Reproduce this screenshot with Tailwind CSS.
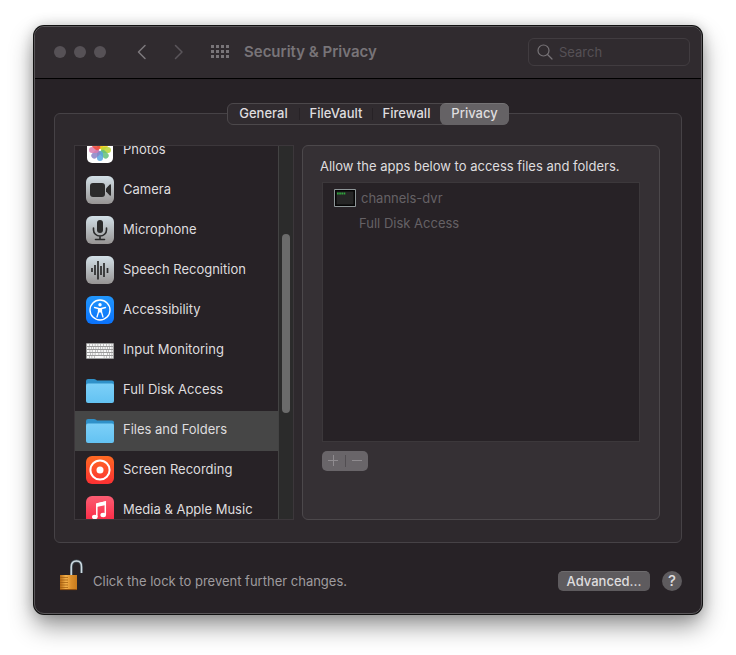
<!DOCTYPE html>
<html lang="en">
<head>
    <meta charset="UTF-8">
    <meta name="viewport" content="width=device-width, initial-scale=1.0">
    <title>Security &amp; Privacy</title>
    <script src="https://cdn.jsdelivr.net/npm/@tailwindcss/browser@4"></script>
</head>
<body class="bg-white px-[34px] pt-[26px] pb-10 font-['Inter',sans-serif] text-[13px] leading-4 text-[#dfdddf]">
    <div class="rounded-[10px] border border-[#5a575a] bg-[#272226] shadow-[0_0_0_1px_#111,0_0_14px_rgba(0,0,0,0.2),0_12px_24px_rgba(0,0,0,0.42)]">
        <!-- Title bar -->
        <header class="flex h-[52px] items-center rounded-t-[9px] border-b border-black bg-[#302b2f] pr-[11px] pb-0.5 pl-[19px]">
            <div class="flex gap-2">
                <button aria-label="Close" class="size-3 rounded-full bg-[#565156]"></button>
                <button aria-label="Minimize" class="size-3 rounded-full bg-[#565156]"></button>
                <button aria-label="Zoom" class="size-3 rounded-full bg-[#565156]"></button>
            </div>
            <button aria-label="Back" class="ml-[31px] text-[#7d797d]">
                <svg class="h-4 w-2.5" viewBox="0 0 10 16" fill="none" stroke="currentColor" stroke-width="1.5" stroke-linecap="round" stroke-linejoin="round"><path d="M8 1.5 1.5 8 8 14.5"/></svg>
            </button>
            <button aria-label="Forward" class="ml-[27px] text-[#5a555a]">
                <svg class="h-4 w-2.5" viewBox="0 0 10 16" fill="none" stroke="currentColor" stroke-width="1.5" stroke-linecap="round" stroke-linejoin="round"><path d="M1.5 1.5 8 8l-6.500 6.500"/></svg>
            </button>
            <button aria-label="Show All" class="ml-[27px] text-[#797579]">
                <svg class="h-[13px] w-[18px]" viewBox="0 0 18 13" fill="currentColor">
                    <path d="M0 0h3v3H0zM5 0h3v3H5zM10 0h3v3h-3zM15 0h3v3h-3zM0 5h3v3H0zM5 5h3v3H5zM10 5h3v3h-3zM15 5h3v3h-3zM0 10h3v3H0zM5 10h3v3H5zM10 10h3v3h-3zM15 10h3v3h-3z"/>
                </svg>
            </button>
            <h1 class="ml-[15px] text-[15px] font-semibold text-[#787478]">Security &amp; Privacy</h1>
            <label class="ml-auto flex h-7 w-[162px] items-center gap-1 rounded-md border border-[#413c40] px-2 text-[#777377]">
                <svg class="size-4 shrink-0" viewBox="0 0 16 16" fill="none" stroke="currentColor" stroke-width="1.2" stroke-linecap="round"><circle cx="6.500" cy="6.500" r="5.500"/><path d="m10.500 10.500 4.500 4.500"/></svg>
                <input type="text" aria-label="Search" placeholder="Search" class="w-full min-w-0 bg-transparent px-0.5 outline-none placeholder:text-[#565156]">
            </label>
        </header>

        <main class="px-[19px] pt-6">
            <!-- Tabs -->
            <div class="relative z-10 mx-auto -mb-3 flex h-[22px] w-[282px] items-center rounded-md border border-[#4c484b] bg-[#302b2f] font-medium" role="tablist">
                <button role="tab" class="h-full w-[71px] pb-0.5">General</button>
                <span class="h-3 w-px bg-[#272226]"></span>
                <button role="tab" class="h-full w-[72px] pb-0.5">FileVault</button>
                <span class="h-3 w-px bg-[#272226]"></span>
                <button role="tab" class="h-full w-[67px] pb-0.5">Firewall</button>
                <button role="tab" aria-selected="true" class="-my-px -mr-px h-[22px] flex-1 rounded-md border-t border-[#757375] bg-[#656265] pb-[3px]">Privacy</button>
            </div>

            <div class="flex gap-2 rounded-md border border-[#464246] bg-[#2e292d] pt-[31px] pr-[21px] pb-[22px] pl-[19px]">
                <!-- Categories -->
                <div class="flex h-[375px] w-[220px] shrink-0 overflow-hidden border border-[#3c373b] bg-[#272226]">
                    <ul class="-mt-[15px] flex-1">
                        <li>
                            <button class="flex h-10 w-full items-center gap-[9px] pb-0.5 pl-[11px]">
                                <svg class="size-7" viewBox="0 0 28 28">
                                    <rect x="1" y="1" width="26" height="26" rx="5" fill="#fff"/>
                                    <g fill-opacity="0.850">
                                        <rect x="11" y="3" width="6" height="10" rx="3" fill="#f89b1c"/>
                                        <rect x="11" y="3" width="6" height="10" rx="3" fill="#f2d31b" transform="rotate(45 14 14)"/>
                                        <rect x="11" y="3" width="6" height="10" rx="3" fill="#b9d532" transform="rotate(90 14 14)"/>
                                        <rect x="11" y="3" width="6" height="10" rx="3" fill="#63c07a" transform="rotate(135 14 14)"/>
                                        <rect x="11" y="3" width="6" height="10" rx="3" fill="#57a5df" transform="rotate(180 14 14)"/>
                                        <rect x="11" y="3" width="6" height="10" rx="3" fill="#8a83c6" transform="rotate(225 14 14)"/>
                                        <rect x="11" y="3" width="6" height="10" rx="3" fill="#d97bae" transform="rotate(270 14 14)"/>
                                        <rect x="11" y="3" width="6" height="10" rx="3" fill="#ef4b3c" transform="rotate(315 14 14)"/>
                                    </g>
                                </svg>
                                <span class="pb-0.5">Photos</span>
                            </button>
                        </li>
                        <li>
                            <button class="flex h-10 w-full items-center gap-[9px] pb-0.5 pl-[11px]">
                                <svg class="size-7" viewBox="0 0 28 28">
                                    <defs><linearGradient id="silver" x2="0" y2="1"><stop stop-color="#d3e0e7"/><stop offset="1" stop-color="#979493"/></linearGradient></defs>
                                    <rect width="28" height="28" rx="6" fill="url(#silver)"/>
                                    <rect x="4" y="7" width="15" height="14" rx="3" fill="#2b2b2b"/>
                                    <path d="M20 12.500 23.800 8.500q1.200-.7 1.200.8v9.400q0 1.500-1.200.8L20 15.500z" fill="#2b2b2b"/>
                                </svg>
                                <span class="pb-0.5">Camera</span>
                            </button>
                        </li>
                        <li>
                            <button class="flex h-10 w-full items-center gap-[9px] pb-0.5 pl-[11px]">
                                <svg class="size-7" viewBox="0 0 28 28">
                                    <rect width="28" height="28" rx="6" fill="url(#silver)"/>
                                    <rect x="11" y="4" width="6" height="13" rx="3" fill="#2b2b2b"/>
                                    <path d="M7.500 12v2a6.500 6 0 0 0 13 0v-2M14 20v3M9.500 23.500h9" fill="none" stroke="#2b2b2b" stroke-width="1.600" stroke-linecap="round"/>
                                </svg>
                                <span class="pb-0.5">Microphone</span>
                            </button>
                        </li>
                        <li>
                            <button class="flex h-10 w-full items-center gap-[9px] pb-0.5 pl-[11px]">
                                <svg class="size-7" viewBox="0 0 28 28">
                                    <rect width="28" height="28" rx="6" fill="url(#silver)"/>
                                    <path d="M6 12v4M9 9v10M12 5v18.500M15 10v9M18 7v14M21.500 12v5" fill="none" stroke="#2b2b2b" stroke-width="1.700"/>
                                </svg>
                                <span class="pb-0.5">Speech Recognition</span>
                            </button>
                        </li>
                        <li>
                            <button class="flex h-10 w-full items-center gap-[9px] pb-0.5 pl-[11px]">
                                <svg class="size-7" viewBox="0 0 28 28">
                                    <defs><linearGradient id="blue" x2="0" y2="1"><stop stop-color="#2196fb"/><stop offset="1" stop-color="#0a72fb"/></linearGradient></defs>
                                    <rect width="28" height="28" rx="6" fill="url(#blue)"/>
                                    <circle cx="14" cy="14" r="10" fill="none" stroke="#fff" stroke-width="1.400"/>
                                    <circle cx="14" cy="8.800" r="1.700" fill="#fff"/>
                                    <path d="m8.500 11.500 4 1v3.500l-1.500 5M19.500 11.500l-4 1v3.500l1.500 5" fill="none" stroke="#fff" stroke-width="1.300" stroke-linecap="round" stroke-linejoin="round"/>
                                    <path d="M12 12h4v4.500h-4z" fill="#fff"/>
                                </svg>
                                <span class="pb-0.5">Accessibility</span>
                            </button>
                        </li>
                        <li>
                            <button class="flex h-10 w-full items-center gap-[9px] pb-0.5 pl-[11px]">
                                <svg class="size-7" viewBox="0 0 28 28">
                                    <rect y="7" width="28" height="16" rx="1" fill="#9b9b9b"/>
                                    <g fill="none" stroke="#f8f8f8" stroke-width="2">
                                        <path d="M1 9h26" stroke-dasharray="2.200 .6"/>
                                        <path d="M1 12h26" stroke-dasharray="1.700 .6"/>
                                        <path d="M1 15h26" stroke-dasharray="2.600 .6 1.700 .6"/>
                                        <path d="M1 18h26" stroke-dasharray="3.200 .6 1.700 .6 1.700 .6"/>
                                        <path d="M1 21h26" stroke-dasharray="2 .6 2 .6 2 .6 9 .6"/>
                                    </g>
                                </svg>
                                <span class="pb-0.5">Input Monitoring</span>
                            </button>
                        </li>
                        <li>
                            <button class="flex h-10 w-full items-center gap-[9px] pb-0.5 pl-[11px]">
                                <svg class="size-7" viewBox="0 0 28 28">
                                    <defs><linearGradient id="folder" x2="0" y2="1"><stop stop-color="#7dd0f8"/><stop offset="1" stop-color="#63c2f2"/></linearGradient></defs>
                                    <path d="M0 5q0-2 2-2h6q1 0 2 .8l1 .7h15q2 0 2 2V20H0z" fill="#2f91c9"/>
                                    <rect y="7.500" width="28" height="19.500" rx="2" fill="url(#folder)"/>
                                </svg>
                                <span class="pb-0.5">Full Disk Access</span>
                            </button>
                        </li>
                        <li>
                            <button aria-current="true" class="flex h-10 w-full items-center gap-[9px] bg-[#464646] pb-0.5 pl-[11px]">
                                <svg class="size-7" viewBox="0 0 28 28">
                                    <path d="M0 5q0-2 2-2h6q1 0 2 .8l1 .7h15q2 0 2 2V20H0z" fill="#2f91c9"/>
                                    <rect y="7.500" width="28" height="19.500" rx="2" fill="url(#folder)"/>
                                </svg>
                                <span class="pb-0.5">Files and Folders</span>
                            </button>
                        </li>
                        <li>
                            <button class="flex h-10 w-full items-center gap-[9px] pb-0.5 pl-[11px]">
                                <svg class="size-7" viewBox="0 0 28 28">
                                    <defs><linearGradient id="orange" x2="0" y2="1"><stop stop-color="#ff6a22"/><stop offset="1" stop-color="#fc3033"/></linearGradient></defs>
                                    <rect width="28" height="28" rx="6" fill="url(#orange)"/>
                                    <circle cx="14" cy="14" r="9.600" fill="none" stroke="#fff" stroke-width="2"/>
                                    <circle cx="14" cy="14" r="3.500" fill="#fff"/>
                                </svg>
                                <span class="pb-0.5">Screen Recording</span>
                            </button>
                        </li>
                        <li>
                            <button class="flex h-10 w-full items-center gap-[9px] pb-0.5 pl-[11px]">
                                <svg class="size-7" viewBox="0 0 28 28">
                                    <defs><linearGradient id="pink" x2="0" y2="1"><stop stop-color="#fb5d73"/><stop offset="1" stop-color="#fa2440"/></linearGradient></defs>
                                    <rect width="28" height="28" rx="6" fill="url(#pink)"/>
                                    <path d="M10.800 21V8l8.500-2v13" fill="none" stroke="#fff" stroke-width="1.500"/>
                                    <path d="m10.500 7.300 9.500-2.100V9l-9.500 2.100z" fill="#fff"/>
                                    <ellipse cx="8.800" cy="21" rx="2.800" ry="2.200" fill="#fff"/>
                                    <ellipse cx="17.200" cy="19" rx="2.800" ry="2.200" fill="#fff"/>
                                </svg>
                                <span class="pb-0.5">Media &amp; Apple Music</span>
                            </button>
                        </li>
                    </ul>
                    <!-- Scroll bar -->
                    <div class="w-[15px] border-l border-[#434343] bg-[#2b2b2b] pt-[88px] pl-[3px]">
                        <div class="h-[179px] w-2 rounded-full bg-[#6b6b6b]"></div>
                    </div>
                </div>

                <!-- Apps for the selected category -->
                <section class="flex min-w-0 flex-1 flex-col items-start rounded-md border border-[#4c484b] bg-[#353034] px-[19px] pt-3">
                    <h2 class="-ml-0.5">Allow the apps below to access files and folders.</h2>
                    <div class="mt-2 h-[260px] w-full border border-[#3c383b] bg-[#272226] pt-0.5 pl-[11px] text-[#656165]">
                        <div class="flex h-[25px] items-center gap-[5px]">
                            <svg class="h-[18px] w-[22px]" viewBox="0 0 22 18">
                                <rect width="22" height="18" rx="1" fill="#8e9698"/>
                                <rect x="1" y="1" width="20" height="16" fill="#050505"/>
                                <rect x="2.500" y="2.500" width="17" height="13" fill="#252525"/>
                                <path d="M3 4.500h8.500" stroke="#2fa63c" stroke-width="2" stroke-dasharray="1.700 .5"/>
                            </svg>
                            channels-dvr
                        </div>
                        <div class="flex h-[25px] items-center pl-[25px]">Full Disk Access</div>
                    </div>
                    <div class="mt-[9px] flex h-5 w-[46px] items-center rounded-[5px] bg-[#696569] text-[#8f8b8f]">
                        <button aria-label="Add" disabled class="flex flex-1 justify-center">
                            <svg class="size-3" viewBox="0 0 12 12" stroke="currentColor"><path d="M1 5.500h10M6.500 0v11"/></svg>
                        </button>
                        <span class="h-3 w-px bg-[#524e52]"></span>
                        <button aria-label="Remove" disabled class="flex flex-1 justify-center">
                            <svg class="size-3" viewBox="0 0 12 12" stroke="currentColor"><path d="M1 5.500h10"/></svg>
                        </button>
                    </div>
                </section>
            </div>
        </main>

        <!-- Footer -->
        <footer class="flex h-[70px] items-center pr-[19px] pb-0.5 pl-6">
            <button aria-label="Lock" class="mb-1 shrink-0">
                <svg class="h-8 w-6" viewBox="0 0 24 32">
                    <defs><linearGradient id="brass"><stop stop-color="#b86a13"/><stop offset="0.350" stop-color="#f3b14b"/><stop offset="0.650" stop-color="#dc8f2b"/><stop offset="1" stop-color="#c87b1d"/></linearGradient></defs>
                    <path d="M12.500 16V8q0-6 5-6t5 6v6" fill="none" stroke="#46535b" stroke-width="2.800"/>
                    <path d="M12.200 16V8q0-6 5.300-6t5 6v6" fill="none" stroke="#cfdbe2" stroke-width="1.500"/>
                    <path d="M1 16h17v14.500L17 31H1z" fill="url(#brass)"/>
                    <path d="M1 18.500h8M1 21h8M1 23.500h8M1 26h8M1 28.500h8" stroke="#9d5a10" stroke-width=".7"/>
                    <path d="M1 30.600h16.500" stroke="#8a4a0c"/>
                </svg>
            </button>
            <p class="mt-2 ml-2.5 text-[#9f9c9f]">Click the lock to prevent further changes.</p>
            <button class="mt-2 ml-auto h-5 w-[92px] rounded-[5px] border-t border-[#6d6b6d] bg-[#5e5b5e] pb-0.5 font-medium">Advanced...</button>
            <button aria-label="Help" class="mt-2 ml-3 size-5 rounded-full bg-[#5e5b5e] text-[15px] font-medium">?</button>
        </footer>
    </div>
</body>
</html>
